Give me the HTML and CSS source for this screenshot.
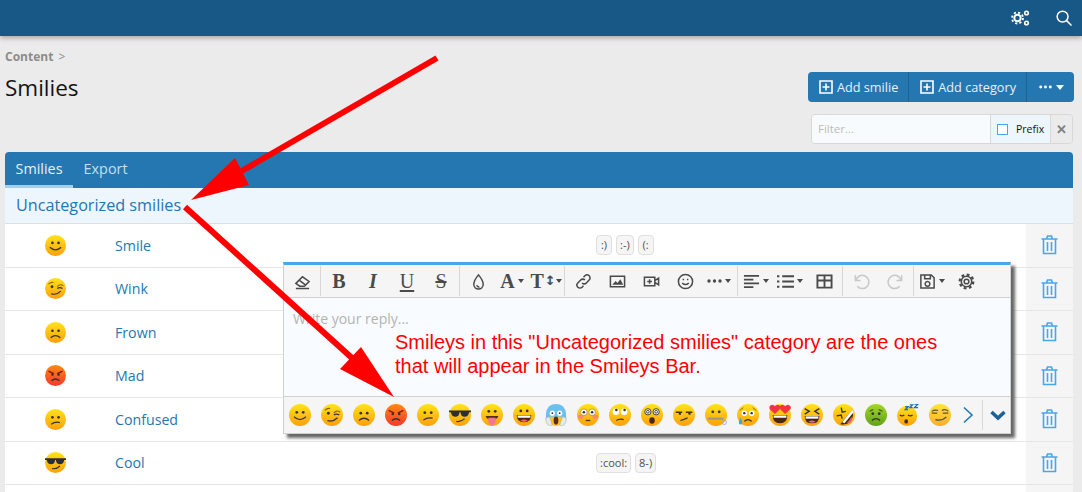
FILE: index.html
```html
<!DOCTYPE html>
<html lang="en">
<head>
    <meta charset="utf-8" />
    <title>Smilies</title>
    <link rel="stylesheet" href="styles.css">
</head>
<body>
    <svg class="defs" width="0" height="0">
        <defs>
            <linearGradient id="yellow" x1="0" y1="0" x2="0" y2="1">
                <stop offset="0" stop-color="#ffe31a" />
                <stop offset="1" stop-color="#ff9f0a" />
            </linearGradient>
            <linearGradient id="red" x1="0" y1="0" x2="0" y2="1">
                <stop offset="0" stop-color="#ff8a12" />
                <stop offset="1" stop-color="#f9362c" />
            </linearGradient>
            <linearGradient id="green" x1="0" y1="0" x2="0" y2="1">
                <stop offset="0" stop-color="#a5d62a" />
                <stop offset="1" stop-color="#5fa317" />
            </linearGradient>
            <symbol id="e-smile" viewBox="0 0 24 24">
                <circle cx="12" cy="12" r="12" fill="url(#yellow)" />
                <circle cx="8.5" cy="9" r="1.5" fill="#333" /><circle cx="15.5" cy="9" r="1.5" fill="#333" />
                <path d="M5.5 14q6.5 6 13 0" fill="none" stroke="#333" stroke-width="1.4" />
            </symbol>
            <symbol id="e-wink" viewBox="0 0 24 24">
                <circle cx="12" cy="12" r="12" fill="url(#yellow)" />
                <path d="M4 7q3-3 6-2M14 10q3-4 7-1" fill="none" stroke="#8a6412" stroke-width="1.2" />
                <circle cx="8" cy="10" r="1.6" fill="#333" />
                <path d="M14 12q3-2 6 0" fill="none" stroke="#333" stroke-width="1.3" />
                <path d="M7 18q6 2 11-3" fill="none" stroke="#333" stroke-width="1.4" />
            </symbol>
            <symbol id="e-frown" viewBox="0 0 24 24">
                <circle cx="12" cy="12" r="12" fill="url(#yellow)" />
                <circle cx="8.5" cy="10" r="1.5" fill="#333" /><circle cx="15.5" cy="10" r="1.5" fill="#333" />
                <path d="M6.5 18q5.500-5 11 0" fill="none" stroke="#333" stroke-width="1.4" />
            </symbol>
            <symbol id="e-mad" viewBox="0 0 24 24">
                <circle cx="12" cy="12" r="12" fill="url(#red)" />
                <path d="M4 7l6 3M20 7l-6 3" stroke="#7a1a10" stroke-width="1.6" />
                <circle cx="8.5" cy="11" r="1.4" fill="#333" /><circle cx="15.5" cy="11" r="1.4" fill="#333" />
                <path d="M7.5 18q4.500-4 9 0" fill="none" stroke="#333" stroke-width="1.5" />
            </symbol>
            <symbol id="e-confused" viewBox="0 0 24 24">
                <circle cx="12" cy="12" r="12" fill="url(#yellow)" />
                <circle cx="8.5" cy="9.5" r="1.5" fill="#333" /><circle cx="15.5" cy="9.5" r="1.5" fill="#333" />
                <path d="M7 17.5q5-3.500 10-2" fill="none" stroke="#333" stroke-width="1.4" />
            </symbol>
            <symbol id="e-cool" viewBox="0 0 24 24">
                <circle cx="12" cy="12" r="12" fill="url(#yellow)" />
                <path d="M0 7h24v2l-2 0q-1 5-5 5t-4.500-5h-1q-.5 5-4.500 5t-5-5l-2 0z" fill="#2b2f33" />
                <path d="M8 19q5 1 9-3" fill="none" stroke="#333" stroke-width="1.3" />
            </symbol>
            <symbol id="e-tongue" viewBox="0 0 24 24">
                <circle cx="12" cy="12" r="12" fill="url(#yellow)" />
                <circle cx="8.5" cy="8" r="1.5" fill="#333" /><circle cx="15.5" cy="8" r="1.5" fill="#333" />
                <path d="M5 13h14q-1 3-3 3.500H8q-2-.5-3-3.500z" fill="#5a2c16" />
                <path d="M8 15h8v4q-1 4-4 4t-4-4z" fill="#f2788f" />
            </symbol>
            <symbol id="e-grin" viewBox="0 0 24 24">
                <circle cx="12" cy="12" r="12" fill="url(#yellow)" />
                <circle cx="8.5" cy="7.5" r="1.5" fill="#333" /><circle cx="15.5" cy="7.5" r="1.5" fill="#333" />
                <path d="M4 12h16q0 8-8 8t-8-8z" fill="#4a2614" />
                <path d="M5 12.500h14v2.500H5z" fill="#fff" />
                <path d="M8 18q4-2 8 0q-4 3-8 0z" fill="#e9637a" />
            </symbol>
            <symbol id="e-scream" viewBox="0 0 24 24">
                <path d="M12 0c7 0 11 5 11 12v4H1v-4C1 5 5 0 12 0z" fill="#6cc0f0" />
                <path d="M3 14h18v6q-4 4-9 4t-9-4z" fill="#ffc21e" />
                <circle cx="8" cy="10" r="2.8" fill="#fff" /><circle cx="16" cy="10" r="2.8" fill="#fff" />
                <circle cx="8" cy="10" r="1" fill="#333" /><circle cx="16" cy="10" r="1" fill="#333" />
                <ellipse cx="12" cy="18" rx="2.6" ry="4.5" fill="#5a2c16" />
                <path d="M1 15q-1 6 4 9l3-1-3-9zM23 15q1 6-4 9l-3-1 3-9z" fill="#e8e8e8" stroke="#9aa" stroke-width=".6" />
            </symbol>
            <symbol id="e-flushed" viewBox="0 0 24 24">
                <circle cx="12" cy="12" r="12" fill="url(#yellow)" />
                <ellipse cx="4" cy="14" rx="3" ry="2.2" fill="#f98a78" /><ellipse cx="20" cy="14" rx="3" ry="2.2" fill="#f98a78" />
                <circle cx="7.5" cy="9" r="3.6" fill="#fff" stroke="#85601a" stroke-width=".6" /><circle cx="16.5" cy="9" r="3.6" fill="#fff" stroke="#85601a" stroke-width=".6" />
                <circle cx="7.5" cy="9" r="1.4" fill="#333" /><circle cx="16.5" cy="9" r="1.4" fill="#333" />
                <path d="M9.5 18h5" stroke="#5a3a10" stroke-width="1.5" />
            </symbol>
            <symbol id="e-rolling" viewBox="0 0 24 24">
                <circle cx="12" cy="12" r="12" fill="url(#yellow)" />
                <circle cx="7.5" cy="8.5" r="3.6" fill="#fff" /><circle cx="16.5" cy="8.5" r="3.6" fill="#fff" />
                <circle cx="8" cy="6.5" r="1.4" fill="#333" /><circle cx="17" cy="6.5" r="1.4" fill="#333" />
                <path d="M8 18q4-2.500 8-1" fill="none" stroke="#333" stroke-width="1.4" />
            </symbol>
            <symbol id="e-dizzy" viewBox="0 0 24 24">
                <circle cx="12" cy="12" r="12" fill="url(#yellow)" />
                <circle cx="7.5" cy="8.5" r="3.4" fill="#fff" stroke="#333" /><circle cx="16.5" cy="8.5" r="3.4" fill="#fff" stroke="#333" />
                <circle cx="7.5" cy="8.5" r="1.5" fill="none" stroke="#333" /><circle cx="16.5" cy="8.5" r="1.5" fill="none" stroke="#333" />
                <ellipse cx="12" cy="18" rx="3" ry="3.5" fill="#4a2614" />
            </symbol>
            <symbol id="e-unamused" viewBox="0 0 24 24">
                <circle cx="12" cy="12" r="12" fill="url(#yellow)" />
                <path d="M3 9h7M14 9h7" stroke="#4a3410" stroke-width="1.4" />
                <circle cx="7.5" cy="10.5" r="1.3" fill="#333" /><circle cx="18" cy="10.5" r="1.3" fill="#333" />
                <path d="M8 18q4-1 8-3" fill="none" stroke="#333" stroke-width="1.4" />
            </symbol>
            <symbol id="e-zipper" viewBox="0 0 24 24">
                <circle cx="12" cy="12" r="12" fill="url(#yellow)" />
                <circle cx="8.5" cy="8.5" r="1.5" fill="#333" /><circle cx="15.5" cy="8.5" r="1.5" fill="#333" />
                <path d="M3 16h17" stroke="#9d9a8a" stroke-width="2.4" />
                <circle cx="21" cy="20" r="2.4" fill="none" stroke="#aab" stroke-width="1" />
            </symbol>
            <symbol id="e-cry" viewBox="0 0 24 24">
                <circle cx="12" cy="12" r="12" fill="url(#yellow)" />
                <circle cx="8" cy="10" r="3" fill="#fff" /><circle cx="16" cy="10" r="3" fill="#fff" />
                <circle cx="8" cy="10" r="1.3" fill="#333" /><circle cx="16" cy="10" r="1.3" fill="#333" />
                <path d="M3 7l4-3M21 7l-4-3" stroke="#85601a" />
                <path d="M8 19q4-4 8 0" fill="none" stroke="#333" stroke-width="1.4" />
                <path d="M4 15q-2.500 4-2 6 1 2 3 1 1-1 .5-3z" fill="#3ba3e6" />
            </symbol>
            <symbol id="e-hearts" viewBox="0 0 24 24">
                <circle cx="12" cy="12" r="12" fill="url(#yellow)" />
                <path d="M4 12h16q0 9-8 9t-8-9z" fill="#4a2614" />
                <path d="M5 12.500h14v2.500H5z" fill="#fff" />
                <path d="M6.500 11L1 6Q-.5 3.500 1.500 1.500 4.500-.5 6.500 2.500 9-.5 11.500 1.500 13 3.500 11.500 6z" fill="#f4333f" />
                <path d="M17.500 11L12.500 6Q11 3.500 12.500 1.500 15-.5 17.500 2.500 20-.5 22.500 1.500 25 3.500 23 6z" fill="#f4333f" />
            </symbol>
            <symbol id="e-laugh" viewBox="0 0 24 24">
                <circle cx="12" cy="12" r="12" fill="url(#yellow)" />
                <path d="M4 5l5 3-5 3M20 5l-5 3 5 3" fill="none" stroke="#333" stroke-width="1.5" />
                <path d="M4 13h16q0 8-8 8t-8-8z" fill="#4a2614" />
                <path d="M5 13.500h14v2.500H5z" fill="#fff" />
                <path d="M8 19q4-2 8 0q-4 3-8 0z" fill="#e9637a" />
            </symbol>
            <symbol id="e-rofl" viewBox="0 0 24 24">
                <circle cx="12" cy="12" r="12" fill="url(#yellow)" />
                <path d="M9 4l1 5 4-1M4 13l5-1 1 4" fill="none" stroke="#333" stroke-width="1.5" />
                <path d="M21 6L8 22q12 2 14-10z" fill="#4a2614" />
                <path d="M21 6L10 20l2.500 1L22.500 9z" fill="#fff" />
                <path d="M20 14q-2 5-5 6 4 2 6-3z" fill="#e9637a" />
            </symbol>
            <symbol id="e-sick" viewBox="0 0 24 24">
                <circle cx="12" cy="12" r="12" fill="url(#green)" />
                <path d="M5 8l4-2M19 8l-4-2" stroke="#2f5a10" stroke-width="1.2" />
                <circle cx="8.5" cy="10.5" r="1.5" fill="#333" /><circle cx="15.5" cy="10.5" r="1.5" fill="#333" />
                <path d="M7.5 18q4.500-4 9 0" fill="none" stroke="#333" stroke-width="1.4" />
            </symbol>
            <symbol id="e-sleep" viewBox="0 0 24 24">
                <circle cx="11" cy="13" r="11" fill="url(#yellow)" />
                <path d="M3 12q2.500 2 5 0M12 12q2.500 2 5 0" fill="none" stroke="#333" stroke-width="1.3" />
                <ellipse cx="10" cy="19" rx="2" ry="2.4" fill="#4a2614" />
                <path d="M9 3h3l-3 3h3M14 1h3l-3 3h3M19 0h4l-4 4h4" fill="none" stroke="#1d6fb8" stroke-width="1.4" />
            </symbol>
            <symbol id="e-smirk" viewBox="0 0 24 24">
                <circle cx="12" cy="12" r="12" fill="url(#yellow)" />
                <path d="M3 8q3-2 7-1M14 7q4-2 7 1M3 10h6M15 10h6" fill="none" stroke="#4a3410" stroke-width="1.2" />
                <path d="M7 17q7 2 12-3" fill="none" stroke="#333" stroke-width="1.4" />
            </symbol>
            <symbol id="i-trash" viewBox="0 0 17 20">
                <path d="M.5 4h16M5.500 4l1-3h4l1 3M2.500 4v14.500h12V4M6.500 7v9M10.500 7v9" fill="none" stroke="currentColor" stroke-width="1.6" />
            </symbol>
            <symbol id="i-plus" viewBox="0 0 14 14">
                <path d="M1 1h12v12H1zM7 3.500v7M3.500 7h7" fill="none" stroke="currentColor" stroke-width="1.6" />
            </symbol>
            <symbol id="i-dots" viewBox="0 0 15 4">
                <circle cx="2" cy="2" r="1.7" fill="currentColor" /><circle cx="7.5" cy="2" r="1.7" fill="currentColor" /><circle cx="13" cy="2" r="1.7" fill="currentColor" />
            </symbol>
        </defs>
    </svg>

    <header class="topbar">
        <svg class="top-icon" width="19" height="16" viewBox="0 0 19 16" fill="none" stroke="#fff">
            <circle cx="6.5" cy="8" r="3.2" stroke-width="2" />
            <circle cx="6.5" cy="8" r="5.5" stroke-width="1.8" stroke-dasharray="2.2 2.1" />
            <circle cx="15.5" cy="3" r="1.8" stroke-width="1.6" />
            <circle cx="15.5" cy="13" r="1.8" stroke-width="1.6" />
        </svg>
        <svg class="top-icon" width="16" height="16" viewBox="0 0 17 17" fill="none" stroke="#fff" stroke-width="1.6">
            <circle cx="7" cy="7" r="5.8" /><path d="M11 11l5.500 5.500" />
        </svg>
    </header>

    <div class="page-head">
        <div class="head-left">
            <div class="crumb">Content <span class="crumb-sep">&gt;</span></div>
            <h1>Smilies</h1>
        </div>
        <div class="head-right">
            <div class="btn-group">
                <a class="btn"><svg width="14" height="14"><use href="#i-plus" /></svg>Add smilie</a>
                <a class="btn"><svg width="14" height="14"><use href="#i-plus" /></svg>Add category</a>
                <a class="btn btn-more"><svg width="13" height="4"><use href="#i-dots" /></svg><span class="caret"></span></a>
            </div>
            <div class="filter">
                <span class="filter-input">Filter...</span>
                <label class="filter-prefix"><span class="checkbox"></span>Prefix</label>
                <span class="filter-clear">✕</span>
            </div>
        </div>
    </div>

    <section class="block">
        <nav class="tabs">
            <a class="tab active">Smilies</a>
            <a class="tab">Export</a>
        </nav>
        <h2 class="cat">Uncategorized smilies</h2>
        <div class="row">
            <svg class="emo" width="21" height="21"><use href="#e-smile" /></svg>
            <a class="name">Smile</a>
            <div class="codes"><code>:)</code><code>:-)</code><code>(:</code></div>
            <div class="del"><svg width="17" height="20"><use href="#i-trash" /></svg></div>
        </div>
        <div class="row">
            <svg class="emo" width="21" height="21"><use href="#e-wink" /></svg>
            <a class="name">Wink</a>
            <div class="codes"></div>
            <div class="del"><svg width="17" height="20"><use href="#i-trash" /></svg></div>
        </div>
        <div class="row">
            <svg class="emo" width="21" height="21"><use href="#e-frown" /></svg>
            <a class="name">Frown</a>
            <div class="codes"></div>
            <div class="del"><svg width="17" height="20"><use href="#i-trash" /></svg></div>
        </div>
        <div class="row">
            <svg class="emo" width="21" height="21"><use href="#e-mad" /></svg>
            <a class="name">Mad</a>
            <div class="codes"></div>
            <div class="del"><svg width="17" height="20"><use href="#i-trash" /></svg></div>
        </div>
        <div class="row">
            <svg class="emo" width="21" height="21"><use href="#e-confused" /></svg>
            <a class="name">Confused</a>
            <div class="codes"></div>
            <div class="del"><svg width="17" height="20"><use href="#i-trash" /></svg></div>
        </div>
        <div class="row">
            <svg class="emo" width="21" height="21"><use href="#e-cool" /></svg>
            <a class="name">Cool</a>
            <div class="codes"><code>:cool:</code><code>8-)</code></div>
            <div class="del"><svg width="17" height="20"><use href="#i-trash" /></svg></div>
        </div>
        <div class="row row-next">
            <div class="codes"></div>
            <div class="del"></div>
        </div>
    </section>

    <div class="editor">
        <div class="toolbar">
            <div class="tool-group">
                <span class="cell"><svg class="tool" viewBox="0 0 18 18"><path d="M2 11l7-7 7 5-5 5H6zM5.500 7.500l6.500 5M2 16.500h14" /></svg></span>
            </div>
            <div class="tool-group">
                <span class="cell tool-text bold">B</span>
                <span class="cell tool-text italic">I</span>
                <span class="cell tool-text under">U</span>
                <span class="cell tool-text strike">S</span>
            </div>
            <div class="tool-group">
                <span class="cell"><svg class="tool" viewBox="0 0 18 18"><path d="M9 2q5 6 5 10a5 5 0 0 1-10 0q0-4 5-10zM7 13q1 2 3 2" /></svg></span>
                <span class="cell tool-text bold">A<i class="mini-caret"></i></span>
                <span class="cell tool-text bold">T<small>↕</small><i class="mini-caret"></i></span>
            </div>
            <div class="tool-group">
                <span class="cell"><svg class="tool" viewBox="0 0 18 18"><path d="M7.500 10.500a3 3 0 0 0 4.500 0l3-3a3 3 0 0 0-4.500-4.500l-1.500 1.500M10.500 7.500a3 3 0 0 0-4.500 0l-3 3a3 3 0 0 0 4.500 4.500l1.500-1.500" /></svg></span>
                <span class="cell"><svg class="tool" viewBox="0 0 18 18"><path d="M1.500 3.500h15v11h-15z" /><path class="solid" d="M3.500 12.500l3.500-4 2 2 3-4 3 6z" /></svg></span>
                <span class="cell"><svg class="tool" viewBox="0 0 18 18"><path d="M1.500 4.500h11v9h-11zM12.500 8l4-2.500v7l-4-2.500M7 6.500v5M4.500 9h5" /></svg></span>
                <span class="cell"><svg class="tool" viewBox="0 0 18 18"><circle cx="9" cy="9" r="7.5" /><path d="M5.500 10.500q3.500 3.500 7 0M6 7h1.500M10.500 7H12" /></svg></span>
                <span class="cell"><svg class="dots" width="15" height="4"><use href="#i-dots" /></svg><i class="mini-caret"></i></span>
            </div>
            <div class="tool-group">
                <span class="cell"><svg class="tool lines" viewBox="0 0 18 18"><path d="M1 3h16M1 7h10M1 11h16M1 15h10" /></svg><i class="mini-caret"></i></span>
                <span class="cell"><svg class="tool lines" viewBox="0 0 18 18"><path d="M5.500 3.500H18M5.500 9H18M5.500 14.500H18M0 3.500h2.500M0 9h2.500M0 14.500h2.500" /></svg><i class="mini-caret"></i></span>
                <span class="cell"><svg class="tool lines" viewBox="0 0 18 18"><path d="M1.500 2.500h15v13h-15zM1.500 8h15M9 2.500v13" /></svg></span>
            </div>
            <div class="tool-group faded">
                <span class="cell"><svg class="tool" viewBox="0 0 18 18"><path d="M2.500 2.500V8H8M3 8a7 7 0 1 1 1.500 6" /></svg></span>
                <span class="cell"><svg class="tool" viewBox="0 0 18 18"><path d="M15.500 2.500V8H10M15 8a7 7 0 1 0-1.500 6" /></svg></span>
            </div>
            <div class="tool-group last">
                <span class="cell"><svg class="tool" viewBox="0 0 18 18"><path d="M2 2h11l3 3v11H2zM6 2v4h6V2M9 9a2.500 2.500 0 1 0 .01 0z" /></svg><i class="mini-caret"></i></span>
                <span class="cell"><svg class="tool" viewBox="0 0 18 18"><circle cx="9" cy="9" r="2.5" /><circle cx="9" cy="9" r="5.5" /><circle class="teeth" cx="9" cy="9" r="7.2" /></svg></span>
            </div>
        </div>
        <div class="editor-body">Write your reply...</div>
        <div class="smiley-bar">
            <svg class="bar-emo" width="22" height="22"><use href="#e-smile" /></svg>
            <svg class="bar-emo" width="22" height="22"><use href="#e-wink" /></svg>
            <svg class="bar-emo" width="22" height="22"><use href="#e-frown" /></svg>
            <svg class="bar-emo" width="22" height="22"><use href="#e-mad" /></svg>
            <svg class="bar-emo" width="22" height="22"><use href="#e-confused" /></svg>
            <svg class="bar-emo" width="22" height="22"><use href="#e-cool" /></svg>
            <svg class="bar-emo" width="22" height="22"><use href="#e-tongue" /></svg>
            <svg class="bar-emo" width="22" height="22"><use href="#e-grin" /></svg>
            <svg class="bar-emo" width="22" height="22"><use href="#e-scream" /></svg>
            <svg class="bar-emo" width="22" height="22"><use href="#e-flushed" /></svg>
            <svg class="bar-emo" width="22" height="22"><use href="#e-rolling" /></svg>
            <svg class="bar-emo" width="22" height="22"><use href="#e-dizzy" /></svg>
            <svg class="bar-emo" width="22" height="22"><use href="#e-unamused" /></svg>
            <svg class="bar-emo" width="22" height="22"><use href="#e-zipper" /></svg>
            <svg class="bar-emo" width="22" height="22"><use href="#e-cry" /></svg>
            <svg class="bar-emo" width="22" height="22"><use href="#e-hearts" /></svg>
            <svg class="bar-emo" width="22" height="22"><use href="#e-laugh" /></svg>
            <svg class="bar-emo" width="22" height="22"><use href="#e-rofl" /></svg>
            <svg class="bar-emo" width="22" height="22"><use href="#e-sick" /></svg>
            <svg class="bar-emo" width="22" height="22"><use href="#e-sleep" /></svg>
            <svg class="bar-emo fade" width="22" height="22"><use href="#e-smirk" /></svg>
            <svg class="bar-next" width="12" height="18" viewBox="0 0 12 18"><path d="M2 1.500l8 7.500-8 7.500" /></svg>
            <span class="bar-toggle">
                <svg width="16" height="11" viewBox="0 0 16 11"><path d="M1.500 2l6.500 6 6.500-6" /></svg>
            </span>
        </div>
    </div>

    <p class="note">Smileys in this "Uncategorized smilies" category are the ones<br>that will appear in the Smileys Bar.</p>

    <svg class="arrows" width="1082" height="492" viewBox="0 0 1082 492">
        <path d="M437 58L240 172" stroke="#f00" stroke-width="6" />
        <path d="M191 200L235 158L249 185z" fill="#f00" />
        <path d="M185 207L352 358" stroke="#f00" stroke-width="6" />
        <path d="M394 397L340 369L361 347z" fill="#f00" />
    </svg>
</body>
</html>
```

FILE: styles.css
```css
* {
    margin: 0;
    padding: 0;
    box-sizing: border-box;
}

html, body {
    height: 492px;
    overflow: hidden;
}

body {
    font-family: "Open Sans", "Noto Sans", sans-serif;
    font-size: 14px;
    background: #ebebeb;
    color: #141414;
    position: relative;
}

.defs {
    position: absolute;
}

.topbar {
    height: 36px;
    background: #185886;
    box-shadow: 0 2px 5px rgba(0, 0, 0, 0.3);
    display: flex;
    justify-content: flex-end;
    align-items: center;
    gap: 26px;
    padding-right: 10px;
}

.page-head {
    display: flex;
    justify-content: space-between;
    padding: 13px 8px 0 5px;
    height: 116px;
}

.crumb {
    font-size: 12px;
    font-weight: 700;
    color: #8c8c8c;
    line-height: 16px;
}

.crumb-sep {
    font-weight: 400;
    margin-left: 2px;
}

h1 {
    font-size: 22.5px;
    font-weight: 400;
    line-height: 30px;
    margin-top: 8px;
}

.head-right {
    margin-top: 23px;
    display: flex;
    flex-direction: column;
    align-items: flex-end;
    gap: 12px;
}

.btn-group {
    display: flex;
    height: 30px;
    background: #2577b1;
    border-radius: 4px;
    color: #e6f1f9;
    font-size: 12.7px;
}

.btn {
    display: flex;
    align-items: center;
    gap: 4px;
    padding: 0 10px 0 11px;
    border-right: 1px solid #1d6295;
}

.btn svg {
    color: #fff;
}

.btn-more {
    border-right: 0;
    gap: 4px;
    width: 47px;
    padding: 0 0 0 12px;
}

.caret {
    border: 4px solid transparent;
    border-top: 5px solid #fff;
    border-bottom: 0;
}

.filter {
    display: flex;
    width: 262px;
    height: 30px;
    margin-right: 1px;
    border: 1px solid #d8d8d8;
    border-radius: 4px;
    font-size: 10.5px;
    line-height: 28px;
    overflow: hidden;
}

.filter-input {
    width: 179px;
    padding-left: 6px;
    background: #f8fbfe;
    color: #bbb;
    font-size: 11.5px;
    border-right: 1px solid #d8d8d8;
}

.filter-prefix {
    width: 60px;
    background: #edf6fd;
    display: flex;
    align-items: center;
    gap: 8px;
    padding-left: 6px;
    border-right: 1px solid #d8d8d8;
    color: #141414;
}

.checkbox {
    width: 11px;
    height: 11px;
    border: 1px solid #47a7eb;
    background: #fff;
}

.filter-clear {
    flex: 1;
    text-align: center;
    background: #ebebeb;
    color: #7f7f7f;
    font-size: 13px;
    font-weight: 700;
}

.block {
    margin: 0 9px 0 5px;
    background: #fff;
    border-radius: 4px 4px 0 0;
}

.tabs {
    display: flex;
    height: 36px;
    background: #2577b1;
    border-radius: 4px 4px 0 0;
    color: #c4dff2;
    font-size: 14.4px;
}

.tab {
    padding: 0 10.5px;
    line-height: 34px;
}

.tab.active {
    color: #e6f1f9;
    border-bottom: 3px solid #a6cfeb;
}

.cat {
    height: 36px;
    background: #edf6fd;
    border-bottom: 1px solid #dfdfdf;
    color: #2577b1;
    font-size: 16.2px;
    font-weight: 400;
    line-height: 35px;
    padding-left: 11px;
}

.row {
    display: flex;
    align-items: center;
    height: 43.5px;
    border-bottom: 1px solid #e6e6e6;
}

.row-next {
    height: 7px;
    border-bottom: 0;
}

.emo {
    margin-left: 40px;
    flex-shrink: 0;
}

.name {
    width: 150px;
    margin-left: 49px;
    color: #2577b1;
    font-size: 14.2px;
}

.codes {
    flex: 1;
    display: flex;
    gap: 4px;
    padding-left: 331px;
}

code {
    font-family: "Open Sans", sans-serif;
    font-size: 11px;
    line-height: 18px;
    min-width: 16px;
    padding: 0 3px;
    text-align: center;
    color: #505050;
    background: #f5f5f5;
    border: 1px solid #dfdfdf;
    border-radius: 4px;
}

.del {
    width: 47px;
    height: 100%;
    background: #f5f5f5;
    display: flex;
    align-items: center;
    justify-content: center;
    color: #47a7eb;
}

.editor {
    position: absolute;
    left: 283px;
    top: 262px;
    width: 728px;
    height: 172px;
    display: flex;
    flex-direction: column;
    border: 1px solid #d0d0d0;
    border-top: 3px solid #47a7eb;
    background: #f5f5f5;
    box-shadow: 4px 4px 3px #666;
}

.toolbar {
    height: 33px;
    display: flex;
    align-items: center;
    border-bottom: 1px solid #d0d0d0;
    flex-shrink: 0;
}

.tool-group {
    display: flex;
    align-items: center;
    height: 30px;
    padding: 0 1px;
    border-right: 1px solid #d8d8d8;
    color: #4a4a4a;
}

.tool-group.last {
    border-right: 0;
}

.cell {
    width: 34px;
    display: flex;
    align-items: center;
    justify-content: center;
    gap: 3px;
    flex-shrink: 0;
}

.tool {
    width: 17px;
    height: 17px;
    fill: none;
    stroke: #4a4a4a;
    stroke-width: 1.6;
    flex-shrink: 0;
}

.tool .solid {
    fill: #4a4a4a;
    stroke: none;
}

.tool .teeth {
    stroke-width: 2.4;
    stroke-dasharray: 3 2.65;
}

.tool.lines {
    stroke-width: 2;
}

.faded .tool {
    stroke: #c8c8c8;
}

.dots {
    color: #4a4a4a;
}

.tool-text {
    font-family: "Liberation Serif", serif;
    font-size: 20px;
    line-height: 22px;
}

.tool-text.bold {
    font-weight: 700;
}

.tool-text.italic {
    font-style: italic;
    font-weight: 700;
}

.tool-text.under {
    text-decoration: underline;
    text-underline-offset: 2px;
}

.tool-text.strike {
    text-decoration: line-through;
}

.tool-text small {
    font-size: 13px;
    font-family: "DejaVu Sans", sans-serif;
    margin: 0 -3px 0 -2px;
}

.mini-caret {
    display: inline-block;
    border: 3.5px solid transparent;
    border-top: 4px solid #4a4a4a;
    border-bottom: 0;
}

.editor-body {
    flex: 1;
    background: #f8fbff;
    border-bottom: 1px solid #d0d0d0;
    color: #b4b4b4;
    padding: 13px 9px;
    font-size: 14px;
    line-height: 16px;
}

.smiley-bar {
    height: 36px;
    display: flex;
    align-items: center;
    padding-left: 5px;
    gap: 10px;
    flex-shrink: 0;
}

.bar-emo {
    flex-shrink: 0;
}

.bar-emo.fade {
    opacity: 0.85;
}

.bar-next {
    margin-left: 1px;
    flex-shrink: 0;
}

.bar-next path {
    fill: none;
    stroke: #2577b1;
    stroke-width: 1.6;
}

.bar-toggle {
    display: flex;
    align-items: center;
    height: 30px;
    border-left: 1px solid #d8d8d8;
    padding-left: 7px;
    margin-left: -2px;
}

.bar-toggle path {
    fill: none;
    stroke: #1d6295;
    stroke-width: 3.5;
}

.note {
    position: absolute;
    left: 395px;
    top: 330px;
    font-family: "Liberation Sans", Arial, sans-serif;
    font-size: 20px;
    line-height: 24px;
    color: #f00;
    white-space: nowrap;
}

.arrows {
    position: absolute;
    left: 0;
    top: 0;
    pointer-events: none;
}
```
